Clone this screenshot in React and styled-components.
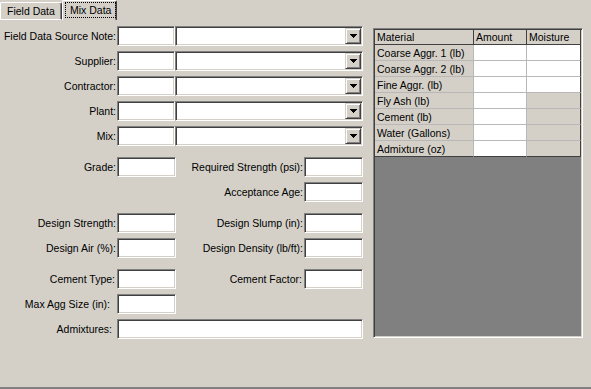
import React from 'react';
import styled, {createGlobalStyle} from 'styled-components';

const GlobalStyle = createGlobalStyle`
  html, body {
    margin: 0;
    padding: 0;
    background: #d4d0c8;
  }
  body {
    font-family: "Liberation Sans", Arial, sans-serif;
    font-size: 10.5px;
    color: #000;
  }
`

const Window = styled.div`
  width: 591px;
  height: 389px;
  display: flex;
  flex-direction: column;
  background: #d4d0c8;
  overflow: hidden;
`

const TabStrip = styled.div`
  flex: none;
  height: 20px;
  display: flex;
  align-items: flex-end;
`

const Tab = styled.div`
  box-sizing: border-box;
  width: ${p => p.$width}px;
  height: ${p => (p.$active ? 20 : 18)}px;
  padding: ${p => (p.$active ? '1px 0 0 2px' : '0 0 0 6px')};
  border-top: 1px solid #fff;
  border-left: 1px solid #fff;
  border-right: 1px solid #404040;
  border-bottom: ${p => (p.$active ? 'none' : '1px solid #fff')};
  border-radius: 2px 2px 0 0;
  box-shadow: inset -1px 0 #808080;
  display: flex;
  align-items: ${p => (p.$active ? 'flex-start' : 'center')};
  white-space: nowrap;
`

const FocusRect = styled.span`
  box-sizing: border-box;
  width: 51px;
  height: 16px;
  border: 1px dotted #000;
  display: flex;
  align-items: center;
  padding-left: 4px;
`

const Panel = styled.div`
  flex: 1;
  display: flex;
  align-items: flex-start;
  border-bottom: 2px solid #808080;
`

const Form = styled.div`
  width: 363px;
  padding-top: 6px;
  display: flex;
  flex-direction: column;
  gap: 11px;
`

const Group = styled.div`
  display: grid;
  grid-template-columns: ${p => (p.$combo ? '117px 58px 188px' : '117px 59px 128px 59px')};
  grid-auto-rows: 20px;
  row-gap: 5px;
`

const Label = styled.label`
  grid-column: ${p => p.$col || 'auto'};
  align-self: center;
  text-align: right;
  white-space: nowrap;
  padding-right: ${p => (p.$pad != null ? p.$pad : 1)}px;
`

const sunken = `
  box-sizing: border-box;
  border: 1px solid;
  border-color: #808080 #fff #fff #808080;
  box-shadow: inset 1px 1px #404040, inset -1px -1px #d4d0c8;
`

const TextBox = styled.input`
  ${sunken}
  grid-column: ${p => p.$span || 'auto'};
  width: 100%;
  height: 20px;
  margin: 0;
  padding: 0 3px;
  background: #fff;
  font: inherit;
  outline: none;
`

const Combo = styled.div`
  ${sunken}
  height: 20px;
  padding: 1px;
  background: #fff;
  display: flex;
  justify-content: flex-end;
  align-items: center;
`

const DropButton = styled.div`
  box-sizing: border-box;
  width: 16px;
  height: 16px;
  background: #d4d0c8;
  border: 1px solid;
  border-color: #d4d0c8 #404040 #404040 #d4d0c8;
  box-shadow: inset 1px 1px #fff, inset -1px -1px #808080;
  display: flex;
  align-items: center;
  justify-content: center;
`

const TableFrame = styled.div`
  ${sunken}
  margin: 8px 0 0 10px;
  width: 210px;
  height: 310px;
  padding: 1px;
  background: #808080;
`

const Grid = styled.div`
  display: grid;
  grid-template-columns: 99px 53px 54px;
  grid-template-rows: 15px;
  grid-auto-rows: 16px;
`

const Cell = styled.div`
  box-sizing: border-box;
  padding-left: 2px;
  display: flex;
  align-items: center;
  white-space: nowrap;
  overflow: hidden;
  background: ${p => (p.$white ? '#fff' : '#d4d0c8')};
  border-right: 1px solid ${p => (p.$head || p.$edge ? '#404040' : '#b8b8b8')};
  border-bottom: 1px solid ${p => (p.$head || p.$last ? '#404040' : '#b8b8b8')};
`

const Arrow = () => (
    <svg width="7" height="4" viewBox="0 0 7 4" shapeRendering="crispEdges">
        <path d="M0 0h7v1H0zM1 1h5v1H1zM2 2h3v1H2zM3 3h1v1H3z" fill="#000"/>
    </svg>
)

const sources = ['Field Data Source Note:', 'Supplier:', 'Contractor:', 'Plant:', 'Mix:']

const materials = [
    {name: 'Coarse Aggr. 1 (lb)', moisture: true},
    {name: 'Coarse Aggr. 2 (lb)', moisture: true},
    {name: 'Fine Aggr. (lb)', moisture: true},
    {name: 'Fly Ash (lb)', moisture: false},
    {name: 'Cement (lb)', moisture: false},
    {name: 'Water (Gallons)', moisture: false},
    {name: 'Admixture (oz)', moisture: false},
]

const App = () => {
    return (
        <Window>
            <GlobalStyle/>
            <TabStrip>
                <Tab $width={62}>Field Data</Tab>
                <Tab $width={55} $active>
                    <FocusRect>Mix Data</FocusRect>
                </Tab>
            </TabStrip>
            <Panel>
                <Form>
                    <Group $combo>
                        {sources.map((label) => (
                            <React.Fragment key={label}>
                                <Label>{label}</Label>
                                <TextBox/>
                                <Combo><DropButton><Arrow/></DropButton></Combo>
                            </React.Fragment>
                        ))}
                    </Group>
                    <Group>
                        <Label>Grade:</Label>
                        <TextBox/>
                        <Label $pad={1}>Required Strength (psi):</Label>
                        <TextBox/>
                        <Label $col="3" $pad={1}>Acceptance Age:</Label>
                        <TextBox/>
                    </Group>
                    <Group>
                        <Label>Design Strength:</Label>
                        <TextBox/>
                        <Label $pad={1}>Design Slump (in):</Label>
                        <TextBox/>
                        <Label>Design Air (%):</Label>
                        <TextBox/>
                        <Label $pad={1}>Design Density (lb/ft):</Label>
                        <TextBox/>
                    </Group>
                    <Group>
                        <Label $pad={2}>Cement Type:</Label>
                        <TextBox/>
                        <Label $pad={2}>Cement Factor:</Label>
                        <TextBox/>
                        <Label $col="1" $pad={7}>Max Agg Size (in):</Label>
                        <TextBox/>
                        <Label $col="1" $pad={5}>Admixtures:</Label>
                        <TextBox $span="2 / 5"/>
                    </Group>
                </Form>
                <TableFrame>
                    <Grid>
                        <Cell $head>Material</Cell>
                        <Cell $head>Amount</Cell>
                        <Cell $head>Moisture</Cell>
                        {materials.map(({name, moisture}, i) => {
                            const last = i === materials.length - 1;
                            return (
                                <React.Fragment key={name}>
                                    <Cell $last={last}>{name}</Cell>
                                    <Cell $white $last={last}/>
                                    <Cell $white={moisture} $edge $last={last}/>
                                </React.Fragment>
                            );
                        })}
                    </Grid>
                </TableFrame>
            </Panel>
        </Window>
    );
};

export default App;
